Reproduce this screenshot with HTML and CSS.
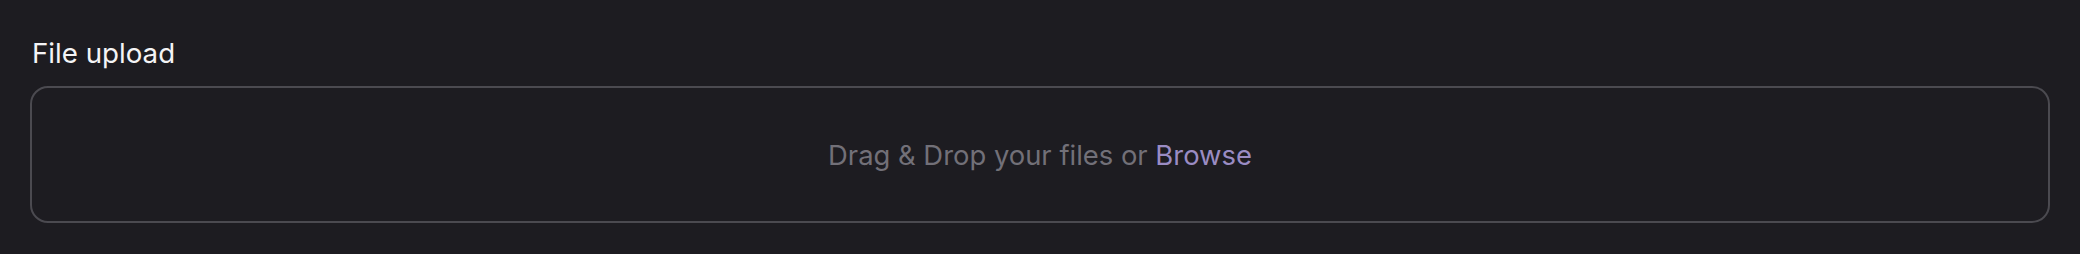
FILE: index.html
```html
<!DOCTYPE html>
<html lang="en">
<head>
<meta charset="utf-8">
<link rel="stylesheet" href="styles.css">
</head>
<body>
<div class="field">
  <label class="field-label">File upload</label>
  <div class="dropzone">
    <span class="dropzone-text">Drag &amp; Drop your files or <span class="browse">Browse</span></span>
  </div>
</div>
</body>
</html>
```

FILE: styles.css
```css
html, body {
  margin: 0;
  padding: 0;
  background: #1d1c21;
}
body {
  font-family: Inter, "Noto Sans", sans-serif;
  padding: 32px 30px 30px;
}
.field {
  display: flex;
  flex-direction: column;
  gap: 12px;
}
.field-label {
  font-size: 27.7px;
  line-height: 42px;
  color: #f4f4f6;
  padding-left: 2px;
}
.dropzone {
  height: 133px;
  border: 2px solid #4b4a50;
  border-radius: 18px;
  display: flex;
  align-items: center;
  justify-content: center;
}
.dropzone-text {
  font-size: 27.4px;
  color: #727078;
}
.browse {
  color: #9a8cc4;
}
```
